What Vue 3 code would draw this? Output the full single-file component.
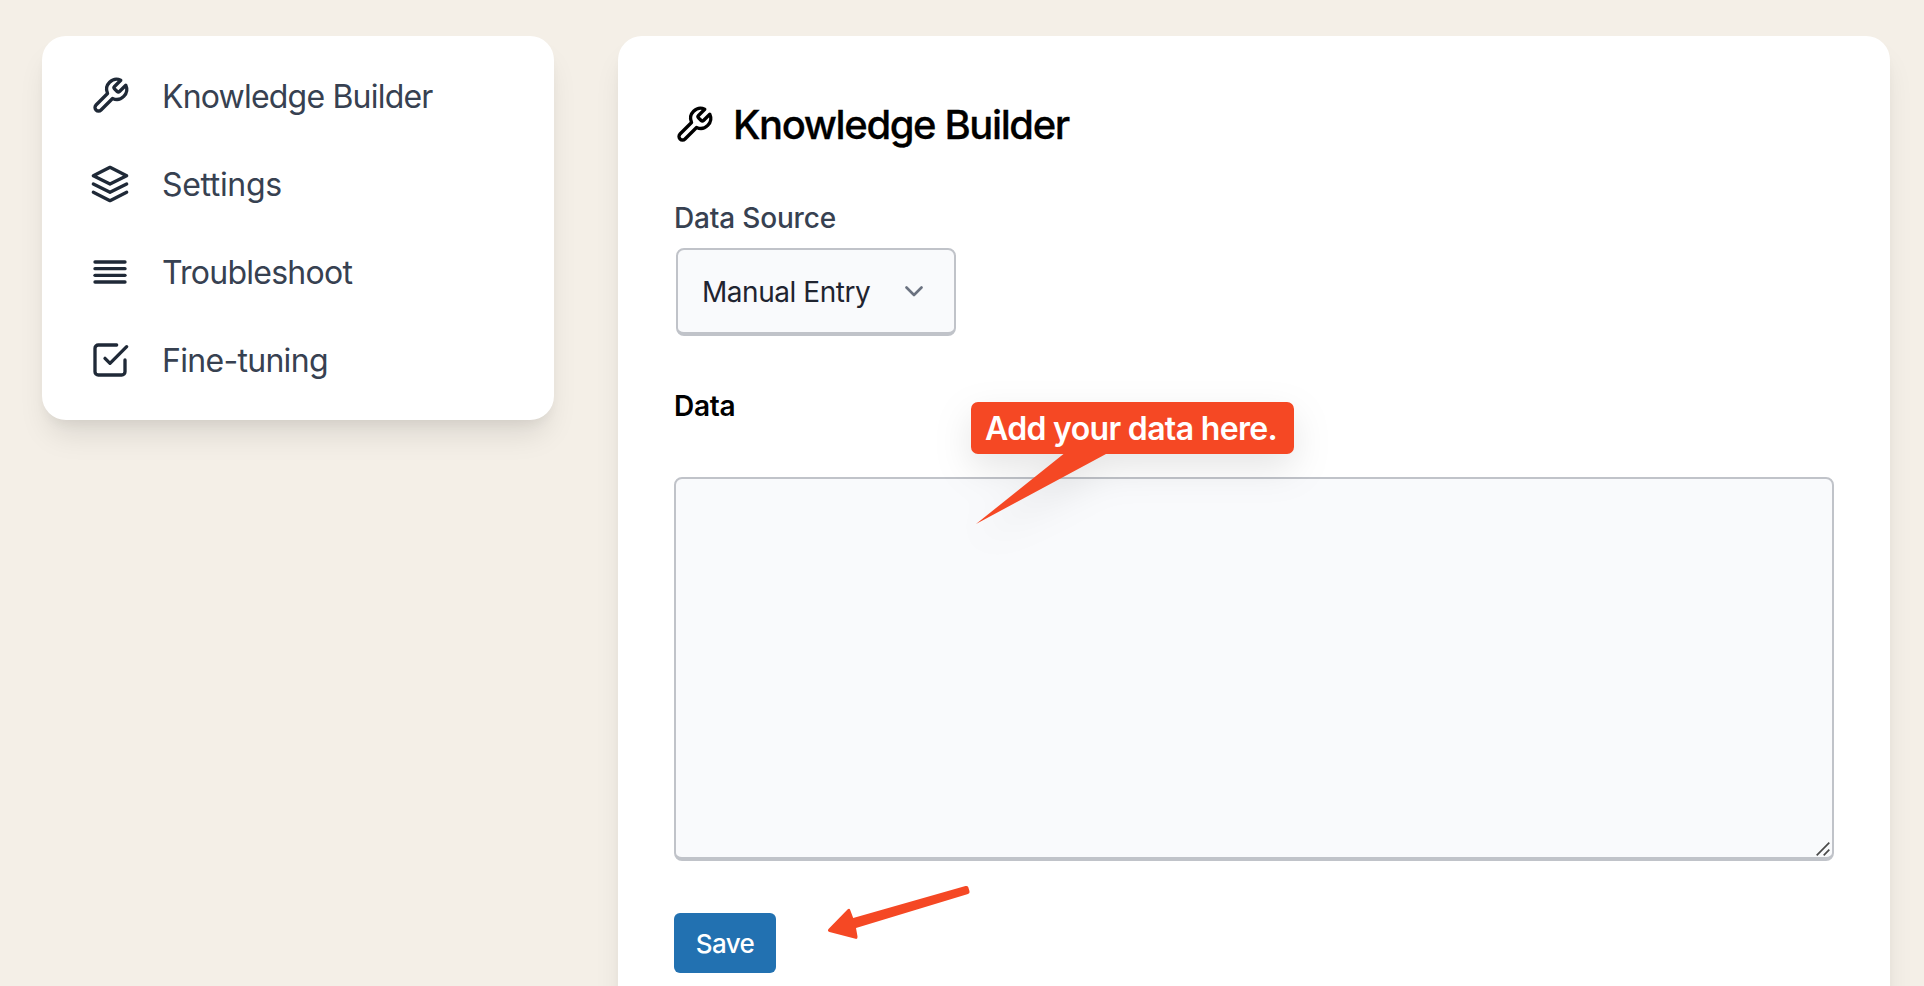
<script setup>
import { ref } from 'vue'

const tool = ['M14.7 6.3a1 1 0 0 0 0 1.4l1.6 1.6a1 1 0 0 0 1.4 0l3.77-3.77a6 6 0 0 1-7.94 7.94l-6.91 6.91a2.12 2.12 0 0 1-3-3l6.91-6.91a6 6 0 0 1 7.94-7.94l-3.76 3.76z']
const items = [
  { label: 'Knowledge Builder', cls: 'kb', paths: tool },
  { label: 'Settings', cls: 'settings', paths: ['M12 2 2 7l10 5 10-5-10-5z', 'M2 17l10 5 10-5', 'M2 12l10 5 10-5'] },
  { label: 'Troubleshoot', cls: 'trouble', paths: ['M21 10H3', 'M21 6H3', 'M21 14H3', 'M21 18H3'] },
  { label: 'Fine-tuning', cls: 'fine', paths: ['M9 11l3 3L22 4', 'M21 12v7a2 2 0 0 1-2 2H5a2 2 0 0 1-2-2V5a2 2 0 0 1 2-2h11'] },
]
const data = ref('')
</script>

<template>
  <div class="page">
    <nav class="side">
      <a v-for="item in items" :key="item.label" class="item">
        <svg class="icon" viewBox="0 0 24 24"><path v-for="p in item.paths" :key="p" :d="p" /></svg>
        <span :class="['t', item.cls]">{{ item.label }}</span>
      </a>
    </nav>
    <main class="main">
      <header class="head">
        <svg class="icon" viewBox="0 0 24 24"><path :d="tool[0]" /></svg>
        <h1><span>Knowledge Builder</span></h1>
      </header>
      <div class="label source"><span>Data Source</span></div>
      <div class="select">
        <span>Manual Entry</span>
        <svg class="chev" viewBox="0 0 18 11"><path d="M1.500 1.500 9 9l7.500-7.500" /></svg>
      </div>
      <div class="label data"><span>Data</span></div>
      <div class="area">
        <textarea v-model="data"></textarea>
        <svg class="grip" viewBox="0 0 14 14"><path d="M.7 13.300 13.300.7M7.700 13.300l5.600-5.600" /></svg>
        <div class="callout">
          <svg class="tail" viewBox="0 0 323 124">
            <path d="M7 0H316a7 7 0 0 1 7 7V45a7 7 0 0 1-7 7H135L5 122 92.500 52H7a7 7 0 0 1-7-7V7a7 7 0 0 1 7-7z" />
          </svg>
          <span>Add your data here.</span>
        </div>
      </div>
      <div class="actions">
        <button class="save"><span>Save</span></button>
        <svg class="arrow" viewBox="0 0 144 56">
          <path d="M.500 16 19.500-3.500q2-1.500 2.700.5l3 8L137.500-27q2-.5 2.800 1.200l1.200 4q.5 2.300-1.500 2.800L28 15l1.500 8.500q.3 3-2 2.300L1.500 19q-2.500-1-1-3z" />
        </svg>
      </div>
    </main>
  </div>
</template>

<style>
body { background: #f4efe7; overflow: hidden; }
</style>

<style scoped>
* { box-sizing: border-box; }
.page {
  display: flex;
  align-items: flex-start;
  gap: 64px;
  height: 986px;
  padding: 36px 34px 0 42px;
  overflow: hidden;
  background: #f4efe7;
  font-family: Inter, "Liberation Sans", sans-serif;
}
.side, .main {
  background: #fff;
  border-radius: 24px;
  box-shadow: 0 20px 30px -6px rgba(0, 0, 0, .1), 0 8px 12px -4px rgba(0, 0, 0, .05);
}
.side { width: 512px; padding: 16px 48px; }
.item { display: flex; align-items: center; gap: 32px; height: 88px; color: #374151; font-size: 32px; line-height: 40px; }
.icon {
  flex: none; width: 40px; height: 40px; overflow: visible;
  fill: none; stroke: #1f2937; stroke-width: 2; stroke-linecap: round; stroke-linejoin: round;
}
.t, h1 span, .label span, .select span, .save span, .callout span { white-space: nowrap; }
.t { padding-top: 2px; }
.kb { letter-spacing: -.8px; }
.settings { letter-spacing: -.35px; }
.trouble { letter-spacing: -.75px; }
.fine { letter-spacing: -.7px; }
.main { width: 1272px; height: 1100px; padding: 69px 56px 0; }
.head { display: flex; align-items: center; gap: 19px; height: 40px; }
.head .icon { stroke: #000; }
h1 { margin: 0; font-size: 40px; font-weight: 500; line-height: 40px; color: #000; letter-spacing: -1.4px; -webkit-text-stroke: .3px #000; }
.label { font-size: 28px; line-height: 41px; height: 40px; font-weight: 500; color: #374151; letter-spacing: -.18px; }
.source { margin-top: 53px; }
.select {
  display: flex; align-items: center; justify-content: space-between;
  width: 280px; height: 88px; margin: 10px 0 0 2px; padding: 2px 31px 0 24px;
  border: 2px solid #c0c3c9; border-bottom-width: 4px; border-radius: 8px;
  background: #f9fafc; color: #1f2430; font-size: 28px; letter-spacing: -.45px;
}
.chev { width: 18px; height: 11px; margin-top: -2px; fill: none; stroke: #6b7280; stroke-width: 2.600; stroke-linecap: round; stroke-linejoin: round; }
.data { margin-top: 50px; color: #000; font-weight: 600; letter-spacing: -.3px; }
.area { position: relative; height: 384px; margin-top: 51px; }
textarea {
  display: block; width: 100%; height: 100%; resize: none; outline: none;
  border: 2px solid #c0c3c9; border-bottom-width: 4px; border-radius: 8px; background: #f9fafc;
}
.grip { position: absolute; right: 4px; bottom: 5px; width: 14px; height: 14px; fill: none; stroke: #4a4a4a; stroke-width: 1.700; }
.callout {
  position: absolute; left: 297px; top: -75px; width: 323px; height: 52px; padding-left: 14px;
  color: #fff; font-size: 32px; font-weight: 600; line-height: 54px; letter-spacing: -.67px;
}
.callout span { position: relative; }
.tail { position: absolute; left: 0; top: 0; width: 323px; height: 124px; overflow: visible; fill: #f54824; filter: drop-shadow(0 14px 18px rgba(0, 0, 0, .1)); }
.actions { display: flex; gap: 52px; margin-top: 52px; }
.save {
  width: 102px; height: 60px; padding: 2px 0 0; border: 0; border-radius: 6px;
  background: #2271b1; color: #fff; font: 500 26px/40px Inter, "Liberation Sans", sans-serif; letter-spacing: -.6px;
}
.arrow { width: 144px; height: 56px; overflow: visible; fill: #f54824; }
</style>
